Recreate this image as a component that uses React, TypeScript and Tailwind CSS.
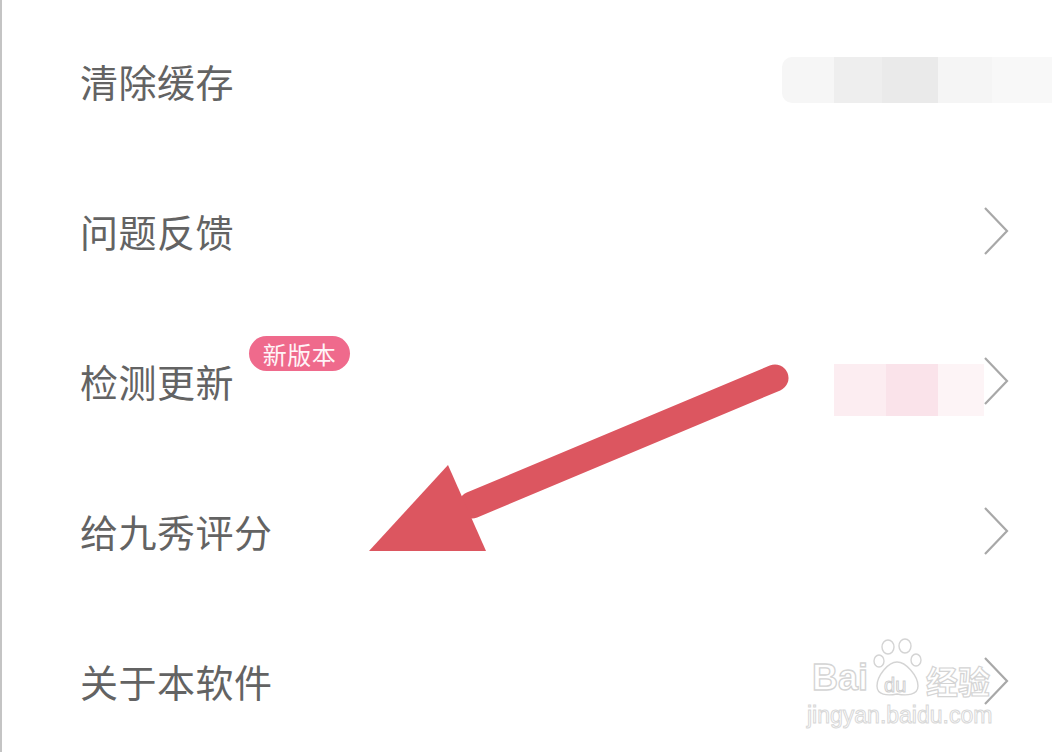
import { ReactNode } from 'react'

const font = { fontFamily: '"Noto Sans CJK SC", "Noto Sans", sans-serif' }
const arial = { fontFamily: '"Liberation Sans", Arial, sans-serif' }

function Chevron() {
  return (
    <svg className="relative z-10 w-[26px] h-[48px]" viewBox="0 0 26 48" fill="none" stroke="#a8a8a8" strokeWidth="2.2">
      <polyline points="2,1 24,24 2,47" />
    </svg>
  )
}

function Row({ label, badge, arrow = true }: { label: string; badge?: ReactNode; arrow?: boolean }) {
  return (
    <div className="h-[150px] flex items-center justify-between pl-[78px] pr-[43px]">
      <span className="relative text-[38px] leading-none text-[#636363] tracking-[0.5px]">
        {label}
        {badge}
      </span>
      {arrow && <Chevron />}
    </div>
  )
}

function Watermark() {
  return (
    <div className="absolute left-[810px] top-[638px] flex flex-col items-start select-none">
      <div className="flex items-end h-[60px]">
        <span className="text-[36px] leading-none font-bold text-white [-webkit-text-stroke:1.3px_#d4d4d4] mb-[2px]" style={arial}>
          Bai
        </span>
        <div className="relative w-[52px] h-[60px] ml-[4px]">
          <svg className="absolute inset-0" viewBox="0 0 52 60" fill="white" stroke="#d4d4d4" strokeWidth="1.4">
            <ellipse cx="16" cy="9" rx="6" ry="7" />
            <ellipse cx="33" cy="8" rx="6" ry="7" />
            <ellipse cx="7" cy="23" rx="5" ry="6" />
            <ellipse cx="44" cy="22" rx="5" ry="6" />
            <path d="M25 24 C16 24 5 38 5 48 C5 57 15 58 25 56 C35 58 46 57 46 48 C46 38 34 24 25 24 Z" />
          </svg>
          <span className="absolute left-[12px] top-[37px] text-[20px] leading-none text-white [-webkit-text-stroke:1px_#cfcfcf]" style={arial}>
            du
          </span>
        </div>
        <span className="text-[32px] leading-none font-bold text-white [-webkit-text-stroke:1.2px_#d4d4d4] ml-[2px] mb-[2px]" style={font}>
          经验
        </span>
      </div>
      <span className="text-[23px] leading-none text-white [-webkit-text-stroke:1px_#d8d8d8] mt-[6px] -ml-[5px]" style={arial}>
        jingyan.baidu.com
      </span>
    </div>
  )
}

export default function App() {
  return (
    <div className="relative w-[1052px] h-[752px] bg-white overflow-hidden border-l-2 border-[#c4c4c4]" style={font}>
      {/* blurred areas */}
      <div className="absolute left-[780px] top-[57px] w-[272px] h-[46px] flex rounded-l-[10px] overflow-hidden">
        <div className="w-[52px] bg-[#f6f6f6]" />
        <div className="w-[48px] bg-[#eeeeee]" />
        <div className="w-[56px] bg-[#eaeaea]" />
        <div className="w-[54px] bg-[#f5f5f5]" />
        <div className="flex-1 bg-[#f8f8f8]" />
      </div>
      <div className="absolute left-[832px] top-[364px] w-[150px] h-[52px] flex">
        <div className="w-[52px] bg-[#fcedf1]" />
        <div className="w-[52px] bg-[#fae3ea]" />
        <div className="flex-1 bg-[#fdf4f6]" />
      </div>

      <div className="relative flex flex-col pt-[6px]">
        <Row label="清除缓存" arrow={false} />
        <Row label="问题反馈" />
        <Row
          label="检测更新"
          badge={
            <span className="absolute left-full ml-[15px] top-[-26px] h-[35px] w-[101px] flex items-center justify-center rounded-full bg-[#ef6a8c] text-[#fff4f7] text-[24px] leading-none whitespace-nowrap">
              新版本
            </span>
          }
        />
        <Row label="给九秀评分" />
        <Row label="关于本软件" />
      </div>

      {/* annotation arrow */}
      <svg className="absolute inset-0 pointer-events-none" width="1052" height="752" viewBox="0 0 1052 752">
        <line x1="773" y1="378" x2="470" y2="505" stroke="#dc5660" strokeWidth="27" strokeLinecap="round" />
        <polygon points="367,551 446,465 484,551" fill="#dc5660" />
      </svg>

      <Watermark />
    </div>
  )
}
